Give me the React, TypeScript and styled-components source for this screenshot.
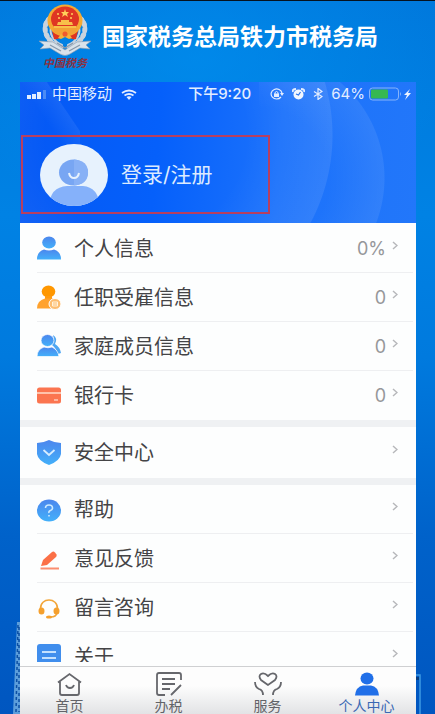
import React from "react";
import styled, { createGlobalStyle } from "styled-components";

const GlobalStyle = createGlobalStyle`
  * { box-sizing: border-box; }
  body {
    margin: 0;
    font-family: Inter, "Noto Sans CJK SC", sans-serif;
    background: #0060c8;
  }
  button { font: inherit; border: 0; padding: 0; background: none; cursor: pointer; }
  svg { display: block; flex: none; }
`;

const Page = styled.div`
  display: flex;
  flex-direction: column;
  height: 100vh;
  border-top: 1px solid #06121f;
  background:
    radial-gradient(ellipse 60% 24% at 45% 8%, rgba(0, 150, 245, 0.5), transparent),
    linear-gradient(180deg, #0078dc 0%, #0082e4 30%, #007ade 50%, #0062ca 75%, #0056c0 100%);
`;

const Banner = styled.header`
  display: flex;
  align-items: flex-start;
  height: 81px;
  padding: 3px 20px 0 38px;
`;

const Emblem = styled.div`
  display: flex;
  flex-direction: column;
  align-items: center;
  width: 54px;
  margin-right: 10px;
`;

const EmblemName = styled.span`
  font-family: "Noto Sans CJK SC", serif;
  font-size: 11px;
  line-height: 12px;
  font-style: italic;
  font-weight: 700;
  color: #8c3040;
`;

const Title = styled.h1`
  margin: 16px 0 0;
  font-size: 23px;
  line-height: 34px;
  font-weight: 700;
  color: #fff;
  white-space: nowrap;
`;

const Stage = styled.div`
  display: flex;
  flex: 1;
  min-height: 0;
`;

const Margin = styled.div<{ $side: "left" | "right" }>`
  display: flex;
  align-items: flex-end;
  justify-content: ${(p) => (p.$side === "left" ? "flex-end" : "flex-start")};
  width: ${(p) => (p.$side === "left" ? 20 : 19)}px;
`;

const Phone = styled.main`
  display: flex;
  flex-direction: column;
  flex: 1;
  min-width: 0;
  background: #fdfefe;
`;

const Hero = styled.section`
  height: 141px;
  background:
    radial-gradient(circle at 126px 53px, transparent 100px, rgba(255, 255, 255, 0.09) 186px, transparent 187px),
    radial-gradient(circle at 0 96px, transparent 70px, rgba(255, 255, 255, 0.08) 125px, transparent 126px) 239px 0 / 160px 141px no-repeat,
    linear-gradient(56deg, transparent 50%, rgba(255, 255, 255, 0.07) 72%, transparent 73%) 0 0 / 60px 90px no-repeat,
    linear-gradient(95deg, #0558f4 0%, #0560fb 35%, #1c72fb 65%, #2277fa 100%);
`;

const StatusBar = styled.div`
  display: flex;
  align-items: center;
  justify-content: space-between;
  height: 24px;
  padding: 0 5px 0 7px;
  font-size: 15px;
  line-height: 24px;
  color: #e3edff;
`;

const StatusGroup = styled.div<{ $gap: number }>`
  display: flex;
  align-items: center;
  gap: ${(p) => p.$gap}px;
`;

const Clock = styled.time`
  font-weight: 500;
  padding-left: 32px;
`;

const LoginButton = styled.button`
  display: flex;
  align-items: center;
  gap: 13px;
  width: 63%;
  height: 79px;
  margin: 29px 0 0 1px;
  padding-left: 17px;
  border: 2px solid #b73f60;
  color: #dcebff;
  font-size: 21px;
  line-height: 30px;
  text-align: left;
`;

const List = styled.div`
  flex: 1;
  min-height: 0;
  overflow: hidden;
  padding-top: 1px;
  margin-bottom: 4px;
`;

const Section = styled.section`
  & + & { border-top: 7px solid #eff1f3; }
`;

const Row = styled.button<{ $height: number }>`
  display: flex;
  align-items: center;
  width: 100%;
  height: ${(p) => p.$height}px;
  padding: 0 18px 0 17px;
  color: #444446;
  text-align: left;
  background: linear-gradient(#eeeff1, #eeeff1) 17px 100% / calc(100% - 20px) 1px no-repeat;
  &:last-child { background: none; }
`;

const RowLabel = styled.span`
  flex: 1;
  padding-left: 13px;
  font-size: 20px;
  line-height: 28px;
`;

const RowValue = styled.span`
  font-size: 18px;
  line-height: 28px;
  color: #96979a;
  margin-right: 6px;
`;

const Arrow = styled.svg`
  margin-bottom: 6px;
`;

const TabBar = styled.nav`
  display: flex;
  height: 48px;
  border-top: 1px solid #cfd0d2;
  background: linear-gradient(#fdfdfd 40%, #e2e3e5);
`;

const Tab = styled.button<{ $active?: boolean }>`
  display: flex;
  flex: 1;
  flex-direction: column;
  align-items: center;
  padding-top: 5px;
  font-size: 14px;
  line-height: 18px;
  color: ${(p) => (p.$active ? "#3a68b4" : "#626368")};
`;

const EmblemArt = () => (
  <svg width="54" height="52" viewBox="0 0 54 52" aria-hidden="true">
    <g fill="none" stroke="#c9d3dd" strokeLinecap="round">
      <path d="M12 14C2 23 8 39 25 44" strokeWidth="5" strokeDasharray="2 4" />
      <path d="M42 14C52 23 46 39 29 44" strokeWidth="5" strokeDasharray="2 4" />
      <path d="M9 15C2 25 7 39 24 46M45 15C52 25 47 39 30 46M14 21C10 29 15 37 24 41M40 21C44 29 39 37 30 41" strokeWidth="2" />
    </g>
    <path d="M1 37l14 1 12 8 12-8 14-1-5 4 4 4-10-1-10 6q-5 3-10 0l-10-6-10 1 4-4z" fill="#d9e2ea" stroke="#8c9bac" strokeWidth=".6" />
    <path d="M12 41l11 6M42 41l-11 6M19 39l8 5 8-5" fill="none" stroke="#8898aa" strokeWidth="1.3" />
    <path d="M14 27h26l-2 8q-5 1-7-3h-8q-2 4-7 3z" fill="#df3420" />
    <ellipse cx="27" cy="16.500" rx="17.500" ry="16" fill="#f5aa33" />
    <ellipse cx="27" cy="15" rx="14" ry="12.500" fill="#df3623" />
    <path d="M14 24h26l-3 5q-10 5-20 0z" fill="#f2a235" />
    <path d="M19 21h16l-1-3h-3v-2h-8v2h-3zM16 24h22v-2H16z" fill="#f8c04a" />
    <path d="M27 5l1 3h3l-2 2 1 3-3-2-3 2 1-3-2-2h3z" fill="#ffd05a" />
    <g fill="#ffd05a"><circle cx="20" cy="10" r="1" /><circle cx="34" cy="10" r="1" /><circle cx="21" cy="14" r="1" /><circle cx="33" cy="14" r="1" /></g>
    <path d="M20 34l3-4q4 5 8 0l3 4-3 1-4-2-4 2z" fill="#f7b23a" />
    <circle cx="27" cy="30" r="2.500" fill="#ef5a2e" />
  </svg>
);

const Signal = () => (
  <svg width="20" height="9" viewBox="0 0 20 9" aria-hidden="true">
    <path d="M0 5h4v4H0zM5 4h4v5H5zM10 2h4v7h-4z" fill="#e3edff" />
    <path d="M16 0h3v9h-3z" fill="#4c8cf5" />
  </svg>
);

const Wifi = () => (
  <svg width="20" height="11" viewBox="-4 0 20 11" aria-hidden="true">
    <path d="M1 4Q8-1 15 4M3.500 6.500q4.500-3 9 0" fill="none" stroke="#e3edff" strokeWidth="1.800" />
    <path d="M5.500 8q2.500-1.500 5 0L8 11z" fill="#e3edff" />
  </svg>
);

const RotationLock = () => (
  <svg width="14" height="12" viewBox="0 0 14 12" aria-hidden="true">
    <path d="M11 9A5.500 5 0 1 1 12 5" fill="none" stroke="#e3edff" strokeWidth="1.200" />
    <path d="M10 5h4l-2 3zM4 5.500h5V9H4z" fill="#e3edff" />
    <path d="M5 6V4.500q1.500-2 3 0V6" fill="none" stroke="#e3edff" />
  </svg>
);

const Alarm = () => (
  <svg width="13" height="12" viewBox="0 0 13 12" aria-hidden="true">
    <ellipse cx="6.500" cy="6.500" rx="5" ry="5" fill="#f1f6ff" />
    <path d="M1 4Q0 1 4 1M12 4Q13 1 9 1" fill="none" stroke="#e3edff" strokeWidth="1.800" />
    <path d="M8.500 4L6.500 7 4 6" fill="none" stroke="#2a73e8" strokeWidth="1.200" />
  </svg>
);

const Bluetooth = () => (
  <svg width="10" height="12" viewBox="0 0 10 12" aria-hidden="true">
    <path d="M1 3.500l8 5L5 11.500V.5l4 3-8 5" fill="none" stroke="#e3edff" strokeWidth="1.200" />
  </svg>
);

const Battery = () => (
  <svg width="42" height="14" viewBox="0 0 42 14" aria-hidden="true">
    <rect x=".5" y="1" width="29" height="12" rx="3" fill="none" stroke="#86b4fb" />
    <rect x="2" y="2.500" width="17" height="9" rx="1" fill="#36b852" />
    <path d="M31 5q2 2 0 4z" fill="#86b4fb" />
    <path d="M41 2l-6 6h3l-2 5 6-7h-3z" fill="#eef4ff" />
  </svg>
);

const Avatar = () => (
  <svg width="68" height="62" viewBox="0 0 68 62" aria-hidden="true">
    <defs>
      <clipPath id="face"><ellipse cx="34" cy="31" rx="34" ry="31" /></clipPath>
    </defs>
    <g clipPath="url(#face)">
      <path d="M0 0h68v62H0z" fill="#e7f2fd" />
      <path d="M9 62q1-19 18-20h16q15 1 17 20z" fill="#85b1fa" />
      <ellipse cx="33.500" cy="28.500" rx="14.500" ry="13" fill="#78a6f3" />
      <path d="M34 15.500q14 1 14 13T34 41.500z" fill="#88b1f6" />
      <path d="M29 29q1 5 5 5t5-5" fill="none" stroke="#e7f2fd" strokeWidth="2" />
    </g>
  </svg>
);

const Chevron = () => (
  <Arrow width="6" height="9" viewBox="0 0 6 9" aria-hidden="true">
    <path d="M1 1l4 3.500L1 8" fill="none" stroke="#b7b8bb" strokeWidth="1.500" />
  </Arrow>
);

type IconName = "person" | "worker" | "family" | "card" | "shield" | "help" | "pencil" | "headset" | "about";

const art: Record<IconName, React.ReactNode> = {
  person: (
    <g fill="url(#blue)">
      <ellipse cx="12" cy="6.500" rx="6.800" ry="6" />
      <path d="M0 23.500q0-8 7-10 5 2 10 0 7 2 7 10z" />
    </g>
  ),
  worker: (
    <>
      <ellipse cx="11.500" cy="6.500" rx="6.800" ry="6" fill="#ff9700" />
      <path d="M8 11h7v4H8z" fill="#ff9a10" />
      <path d="M0 23.500q0-8 8-10h8l2 10z" fill="#ffa22e" />
      <ellipse cx="18" cy="19" rx="6" ry="5.500" fill="#fdbd70" stroke="#fff" strokeWidth="1" />
      <path d="M15.500 17h5v4h-5zM15.500 19h5" fill="none" stroke="#fff3dd" />
    </>
  ),
  family: (
    <>
      <path d="M16 1q5 3 2 9 5 3 6 9l-3 1q-2-6-6-9 3-4 1-10z" fill="#4ea6f2" />
      <g fill="url(#blue)" stroke="#fff" strokeWidth=".7">
        <ellipse cx="10.500" cy="6.500" rx="6.500" ry="6" />
        <path d="M0 22.500q0-7 7-9.500 4 1.500 8 0 6 3 7 9.500z" />
      </g>
    </>
  ),
  card: (
    <>
      <rect y="4.500" width="24" height="16" rx="2.500" fill="#fb7550" />
      <path d="M0 9h24v2H0z" fill="#ffc2ab" />
      <path d="M17 17h4" stroke="#ffe2d6" strokeWidth="1.200" />
    </>
  ),
  shield: (
    <>
      <path d="M12 0q6 3 12 3v11q-1 7-12 11Q1 21 0 14V3q6 0 12-3z" fill="url(#blue)" />
      <path d="M6.500 10l5.500 5 5.500-5" fill="none" stroke="#d6edff" strokeWidth="1.800" />
    </>
  ),
  help: (
    <>
      <ellipse cx="12" cy="13.500" rx="12" ry="11" fill="url(#blue)" />
      <path d="M8.500 11Q8.500 8 12 8t3.500 3q0 2-2 2.500T12 16M12 18v1.500" fill="none" stroke="#cce9ff" strokeWidth="1.600" />
    </>
  ),
  pencil: (
    <>
      <path d="M4 20l2-6L15 6q1.500-1 3 .5l1.500 2Q20 10 19 11l-9 8z" fill="#fb7047" />
      <path d="M3.500 22.500h18.500" stroke="#fb8e70" strokeWidth="2" />
    </>
  ),
  headset: (
    <>
      <path d="M3.500 14C3 2 21 2 20.500 14M20 18q-1 4-6 4" fill="none" stroke="#f2a63a" strokeWidth="1.600" />
      <ellipse cx="4.500" cy="16" rx="3" ry="3.500" fill="#f5a02d" />
      <ellipse cx="19.500" cy="16" rx="3" ry="3.500" fill="#f5a02d" />
      <ellipse cx="12" cy="22" rx="3" ry="1.600" fill="#f5a02d" />
    </>
  ),
  about: (
    <>
      <rect width="24" height="26" rx="3" fill="#408eed" />
      <path d="M5 8h14M5 14h14" stroke="#c4e1ff" strokeWidth="1.800" />
    </>
  ),
};

const RowIcon = ({ name }: { name: IconName }) => (
  <svg width="24" height="25" viewBox="0 0 24 25" aria-hidden="true">
    <defs>
      <linearGradient id="blue" x1="0" y1="0" x2="0" y2="1">
        <stop offset="0" stopColor="#4c86ed" />
        <stop offset="1" stopColor="#43b0fa" />
      </linearGradient>
    </defs>
    {art[name]}
  </svg>
);

const tabArt = {
  home: (
    <>
      <path d="M4 9v12q0 2 2 2h15q2 0 2-2V9M2 10.500L13.500 2 25 10.500" />
      <path d="M10 13q1 3 4 3t4-3" />
    </>
  ),
  tax: (
    <>
      <path d="M10 23H4q-2 0-2-2V3q0-2 2-2h20q2 0 2 2v5M16 23L26 13" />
      <path d="M7 7h13M7 12h13M7 17h8" />
    </>
  ),
  service: (
    <>
      <path d="M14 13L7 8Q4 4 7 2t7 2q4-4 7-2t0 6z" />
      <path d="M1 10q0 5 4 7 4 1 4 6M27 10q0 5-4 7-4 1-4 6" />
    </>
  ),
  me: (
    <g fill="#206fe8" stroke="none">
      <ellipse cx="14" cy="6.500" rx="6.500" ry="6" />
      <path d="M2 23.500q1-9 8-10h8q7 1 8 10z" />
    </g>
  ),
};

const TabIcon = ({ name }: { name: keyof typeof tabArt }) => (
  <svg width="28" height="25" viewBox="0 0 28 25" fill="none" stroke="#66676c" strokeWidth="1.800" aria-hidden="true">
    {tabArt[name]}
  </svg>
);

const LeftTower = () => (
  <svg width="7" height="92" viewBox="0 0 7 92" aria-hidden="true">
    <path d="M4 0h3v92H0z" fill="#5c9edb" />
    <path d="M5 3L3 90M6 5v85" stroke="#0b4fa4" strokeWidth="1.500" strokeDasharray="3 3" />
  </svg>
);

const RightTower = () => (
  <svg width="5" height="40" viewBox="0 0 5 40" aria-hidden="true">
    <path d="M0 1h4v39" fill="none" stroke="#3e9be4" strokeWidth="1.500" />
    <path d="M0 3h3v3H0z" fill="#063d80" />
  </svg>
);

type Item = { icon: IconName; label: string; value?: string };

const sections: { height: number; items: Item[] }[] = [
  {
    height: 49,
    items: [
      { icon: "person", label: "个人信息", value: "0%" },
      { icon: "worker", label: "任职受雇信息", value: "0" },
      { icon: "family", label: "家庭成员信息", value: "0" },
      { icon: "card", label: "银行卡", value: "0" },
    ],
  },
  { height: 51, items: [{ icon: "shield", label: "安全中心" }] },
  {
    height: 49,
    items: [
      { icon: "help", label: "帮助" },
      { icon: "pencil", label: "意见反馈" },
      { icon: "headset", label: "留言咨询" },
      { icon: "about", label: "关于" },
    ],
  },
];

const tabs: { icon: keyof typeof tabArt; label: string }[] = [
  { icon: "home", label: "首页" },
  { icon: "tax", label: "办税" },
  { icon: "service", label: "服务" },
  { icon: "me", label: "个人中心" },
];

export default function App() {
  return (
    <>
      <GlobalStyle />
      <Page>
        <Banner>
          <Emblem>
            <EmblemArt />
            <EmblemName>中国税务</EmblemName>
          </Emblem>
          <Title>国家税务总局铁力市税务局</Title>
        </Banner>
        <Stage>
          <Margin $side="left"><LeftTower /></Margin>
          <Phone>
            <Hero>
              <StatusBar>
                <StatusGroup $gap={5}>
                  <Signal />
                  <span>中国移动</span>
                  <Wifi />
                </StatusGroup>
                <Clock>下午9:20</Clock>
                <StatusGroup $gap={4}>
                  <StatusGroup $gap={8}>
                    <RotationLock />
                    <Alarm />
                    <Bluetooth />
                    <span>64%</span>
                  </StatusGroup>
                  <Battery />
                </StatusGroup>
              </StatusBar>
              <LoginButton>
                <Avatar />
                登录/注册
              </LoginButton>
            </Hero>
            <List>
              {sections.map((section, i) => (
                <Section key={i}>
                  {section.items.map((item) => (
                    <Row key={item.label} $height={section.height}>
                      <RowIcon name={item.icon} />
                      <RowLabel>{item.label}</RowLabel>
                      {item.value && <RowValue>{item.value}</RowValue>}
                      <Chevron />
                    </Row>
                  ))}
                </Section>
              ))}
            </List>
            <TabBar>
              {tabs.map((tab) => (
                <Tab key={tab.label} $active={tab.icon === "me"}>
                  <TabIcon name={tab.icon} />
                  {tab.label}
                </Tab>
              ))}
            </TabBar>
          </Phone>
          <Margin $side="right"><RightTower /></Margin>
        </Stage>
      </Page>
    </>
  );
}
